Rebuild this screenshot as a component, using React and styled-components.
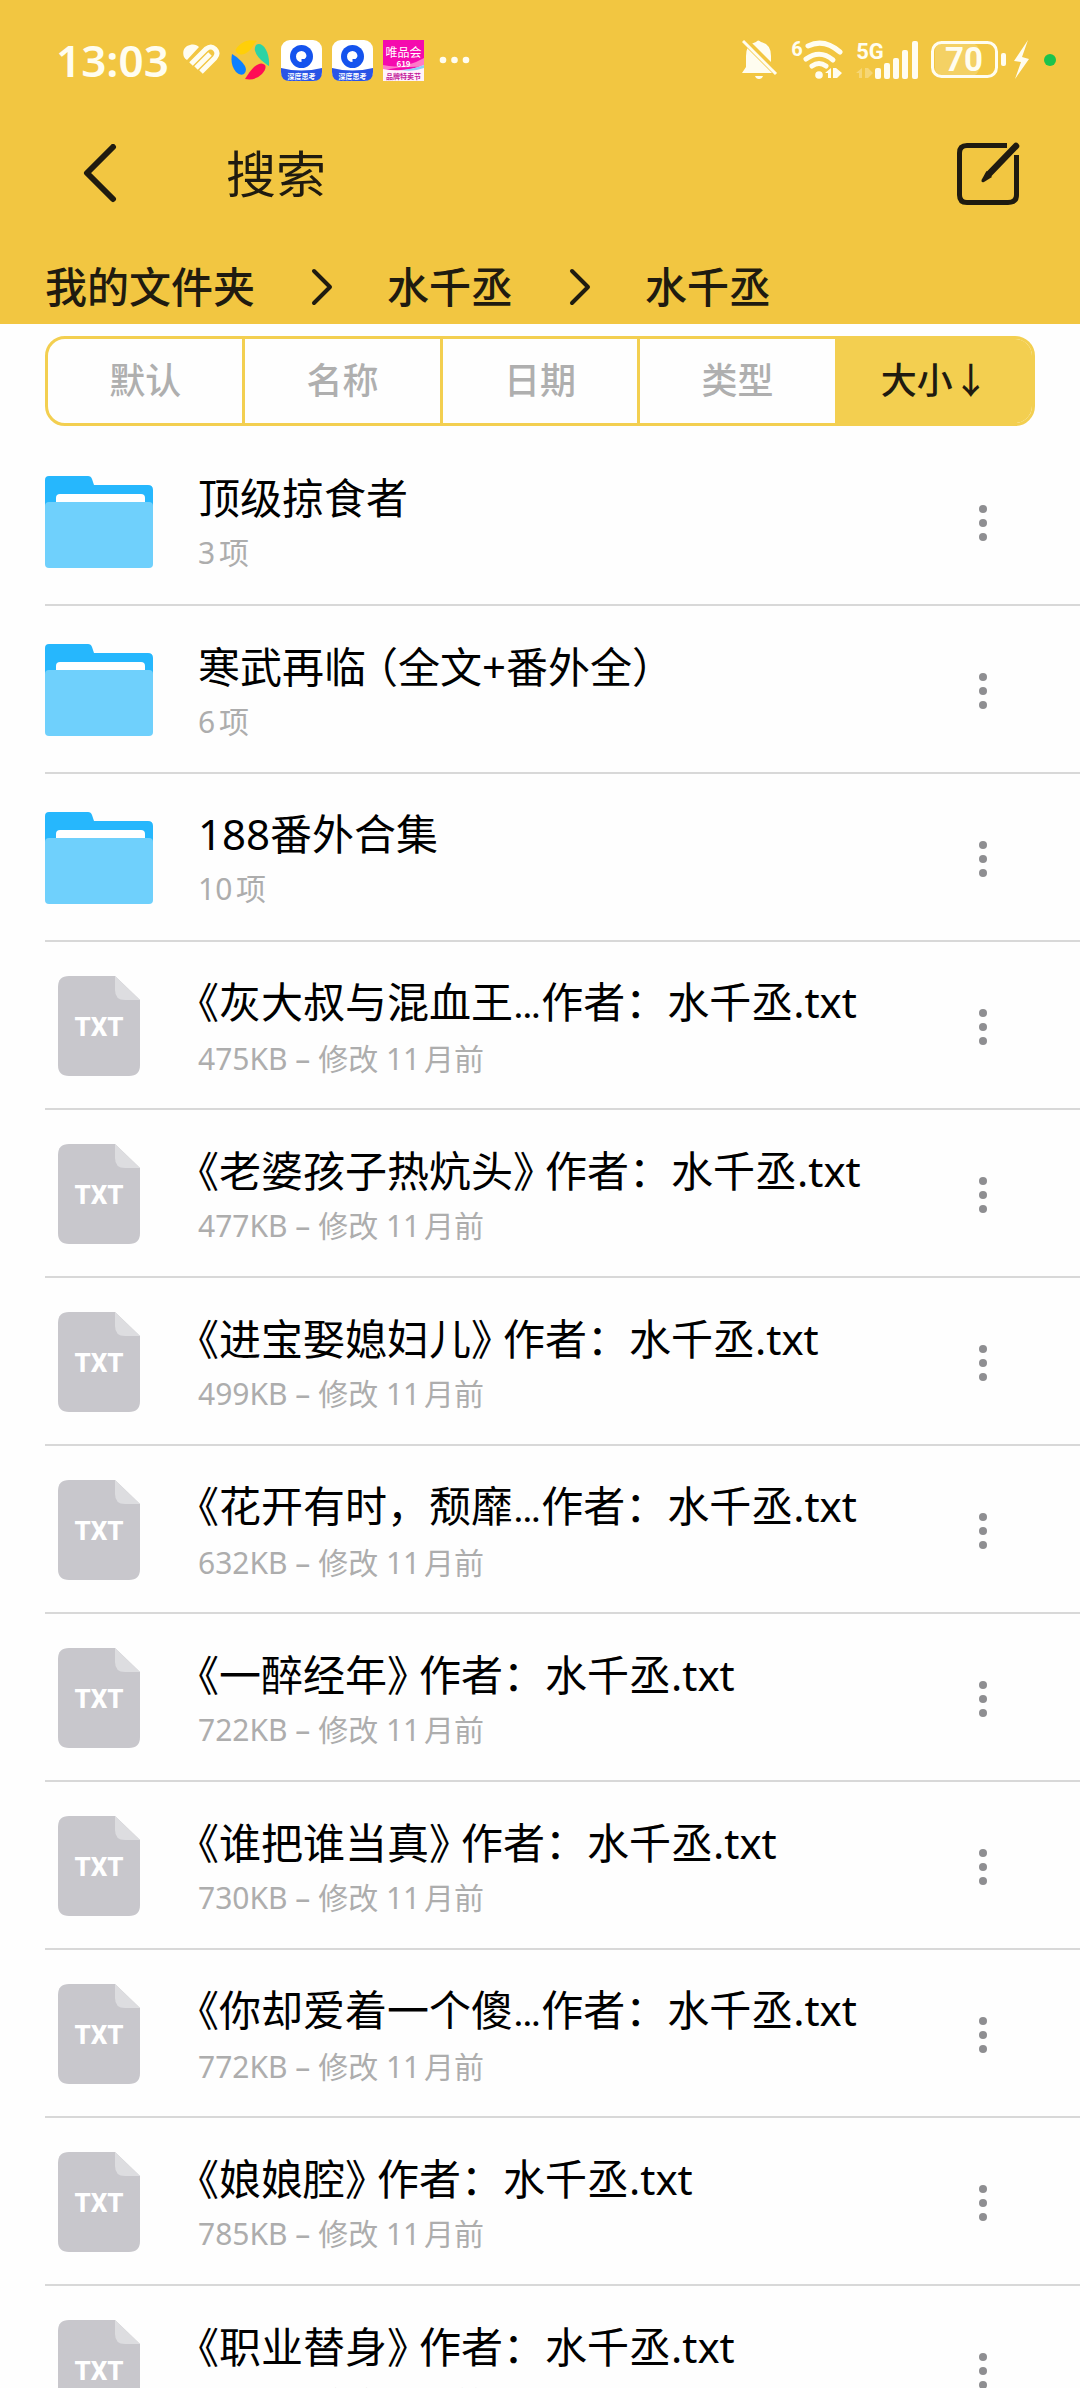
import React from "react";
import styled, { createGlobalStyle } from "styled-components";

const GlobalStyle = createGlobalStyle`
  * { box-sizing: border-box; }
  html, body { margin: 0; background: #fefefe; }
  body, button {
    font-family: "Noto Sans", "Noto Sans CJK SC", sans-serif;
  }
  button { margin: 0; padding: 0; border: 0; background: none; color: inherit; cursor: pointer; }
  svg { display: block; flex: none; }
`;

const Screen = styled.div`
  display: flex;
  flex-direction: column;
  height: 100vh;
  overflow: hidden;
  color: #000;
`;

const Header = styled.header`
  flex: none;
  background: #f2c641;
  color: #1f1b10;
`;

const StatusBar = styled.div`
  display: flex;
  align-items: center;
  justify-content: space-between;
  height: 120px;
  padding: 0 24px 0 56px;
  color: #fffdf0;
`;

const StatusGroup = styled.div`
  display: flex;
  align-items: center;
  gap: ${(p) => p.$gap}px;
`;

const Clock = styled.time`
  margin-right: 4px;
  font-size: 44px;
  line-height: 60px;
  font-weight: 600;
`;

const TitleBar = styled.div`
  display: flex;
  align-items: center;
  height: 108px;
  padding: 0 45px 0 70px;
`;

const IconButton = styled.button`
  display: flex;
  align-items: center;
  justify-content: center;
  width: ${(p) => p.$size}px;
  height: ${(p) => p.$size}px;
`;

const Title = styled.h1`
  flex: 1;
  margin: 0 0 0 96px;
  font-size: 50px;
  line-height: 72px;
  font-weight: 400;
`;

const Crumbs = styled.nav`
  display: flex;
  align-items: center;
  gap: 54px;
  height: 96px;
  padding: 22px 45px 0;
`;

const Crumb = styled.a`
  color: inherit;
  text-decoration: none;
  font-size: 42px;
  line-height: 60px;
  font-weight: 500;
`;

const SortBar = styled.div`
  display: flex;
  flex: none;
  height: 90px;
  margin: 12px 45px;
  border: 3px solid #f3cf50;
  border-radius: 20px;
  overflow: hidden;
`;

const SortTab = styled.button`
  flex: 1;
  border-right: ${(p) => (p.$last ? "0" : "3px solid #f3cf50")};
  background: ${(p) => (p.$active ? "#f3cf50" : "transparent")};
  color: ${(p) => (p.$active ? "#1f1b10" : "#afafaf")};
  font-size: 36px;
  line-height: 54px;
  font-weight: 500;
`;

const List = styled.ul`
  flex: 1;
  min-height: 0;
  margin: 0;
  padding: 0 0 0 45px;
  list-style: none;
  overflow-y: auto;
  scrollbar-width: none;
`;

const Row = styled.li`
  display: flex;
  align-items: center;
  height: 168px;
  padding-right: 53px;
  box-shadow: inset 0 -2px 0 #d8d8d8;
`;

const Thumb = styled.div`
  display: flex;
  flex: none;
  justify-content: center;
  width: 108px;
  margin-right: 45px;
`;

const Info = styled.div`
  flex: 1;
  min-width: 0;
  padding-top: 2px;
`;

const Name = styled.div`
  font-size: 42px;
  line-height: 60px;
  white-space: nowrap;
`;

const Bracket = styled.span`
  font-family: "Noto Sans CJK SC", sans-serif;
  font-feature-settings: "halt";
`;

const Ellipsis = styled.span`
  font-family: Roboto, sans-serif;
`;

const Meta = styled.div`
  color: #adadad;
  font-size: 30px;
  line-height: 50px;
  text-autospace: normal;
`;

const FileLabel = styled.text`
  fill: #fff;
  font-family: Roboto, sans-serif;
  font-size: 26px;
  font-weight: 800;
  text-anchor: middle;
`;

const BadgeText = styled.text`
  font-family: "Noto Sans CJK SC", sans-serif;
  font-size: ${(p) => p.$size}px;
  font-weight: ${(p) => p.$weight || 700};
  text-anchor: middle;
`;

const StatusText = styled.text`
  fill: currentColor;
  font-family: Roboto, sans-serif;
  font-size: ${(p) => p.$size}px;
  font-weight: 700;
  text-anchor: middle;
`;

const HeartIcon = () => (
  <svg width="38" height="34" viewBox="0 0 38 34" fill="none" stroke="currentColor" aria-hidden="true">
    <path d="M1 14C-1 9 1 3 7 2c4-1 7 0 9 2L4 17Q2 16 1 14z" fill="currentColor" stroke="none" />
    <g strokeWidth="5">
      <path d="M8 21L23 6Q28 2 32 6Q36 10 32 15L18 29" strokeLinejoin="round" />
      <path d="M13 25L27 11" />
    </g>
  </svg>
);

const PinwheelIcon = () => (
  <svg width="40" height="42" viewBox="0 0 40 42" aria-hidden="true">
    <path d="M5 10C11 1 20 0 26 2C23 4 22 9 18 12Q11 18 6 14Q4 12 5 10z" fill="#ffcf08" />
    <path d="M25 6C31 2 39 12 38 27Q36 26 30 21Q21 12 25 6z" fill="#2dd3a5" />
    <path d="M1 15Q5 17 10 22Q18 30 13 35Q9 37 5 33Q-1 26 1 15z" fill="#0b80ff" />
    <path d="M14 40C17 35 20 31 23 28Q30 22 34 26Q36 29 31 35Q24 42 14 40z" fill="#ff0d55" />
  </svg>
);

const ExamIcon = () => (
  <svg width="41" height="41" viewBox="0 0 41 41" aria-hidden="true">
    <rect width="41" height="41" rx="9" fill="#fff" />
    <path d="M0 28Q20 33 41 28V32Q41 41 32 41H9Q0 41 0 32z" fill="#2a55e6" />
    <circle cx="20.500" cy="16.500" r="11.500" fill="#1453ee" />
    <path d="M20.500 11a5.500 5.500 0 1 0 0 11v-3h3a5 5 0 0 0 2-3a5.500 5.500 0 0 0-5-5z" fill="#fff" />
    <BadgeText x="20.500" y="38.500" $size={7} fill="#fff">深度思考</BadgeText>
  </svg>
);

const ShopIcon = () => (
  <svg width="41" height="41" viewBox="0 0 41 41" aria-hidden="true">
    <rect width="41" height="41" fill="#f50aae" />
    <path d="M0 25Q20 30 41 18V27Q20 26 0 30z" fill="#ff7ac8" />
    <path d="M0 29Q22 33 41 25V41H0z" fill="#fff3fb" />
    <path d="M18 30Q32 29 41 25V28Q30 32 18 30z" fill="#8fd0f5" />
    <BadgeText x="20.500" y="17" $size={12} $weight={400} fill="#fff">唯品会</BadgeText>
    <BadgeText x="20.500" y="27" $size={8} fill="#fff">619</BadgeText>
    <BadgeText x="20.500" y="38.500" $size={7} fill="#c2189b">品牌特卖节</BadgeText>
  </svg>
);

const MoreNotices = () => (
  <svg width="38" height="10" viewBox="0 0 38 10" fill="currentColor" aria-hidden="true">
    <circle cx="9" cy="5" r="3.300" />
    <circle cx="20.500" cy="5" r="3.300" />
    <circle cx="32" cy="5" r="3.300" />
  </svg>
);

const MutedIcon = () => (
  <svg width="36" height="42" viewBox="0 0 36 42" fill="currentColor" aria-hidden="true">
    <path d="M0 34L4 28V17Q4 5 14 3Q16 0 19 3Q29 5 29 17V28L34 34z" />
    <path d="M13 37h8q-1 3-4 3t-4-3z" />
    <path d="M2 1L36 35" stroke="#f2c641" strokeWidth="7" />
    <path d="M1 2L34 35" stroke="currentColor" strokeWidth="3" />
  </svg>
);

const WifiIcon = () => (
  <svg width="54" height="42" viewBox="0 0 54 42" fill="none" stroke="currentColor" aria-hidden="true">
    <StatusText x="7" y="17" $size={20} stroke="none">6</StatusText>
    <g strokeWidth="5" strokeLinecap="round">
      <path d="M18 7Q34 -1 50 13" />
      <path d="M16 20Q30 10 43 21" />
      <path d="M22 27Q29 22 36 27" />
    </g>
    <g fill="currentColor" stroke="none">
      <circle cx="29" cy="36" r="3.800" />
      <path d="M35 34l6-5v10h-3v-5zM43 29h3l6 5l-5 5h-4z" />
    </g>
  </svg>
);

const SignalIcon = () => (
  <svg width="63" height="42" viewBox="0 0 63 42" fill="currentColor" aria-hidden="true">
    <StatusText x="14" y="20" $size={22}>5G</StatusText>
    <path d="M0 34l6-5v10H3v-5zM9 29h3l5 5l-5 5H9z" opacity="0.3" />
    <rect x="19" y="29" width="6" height="11" rx="2" />
    <rect x="28" y="24" width="6" height="16" rx="2" />
    <rect x="37" y="19" width="6" height="21" rx="2" />
    <rect x="46" y="11" width="6" height="29" rx="2" />
    <rect x="56" y="2" width="6" height="38" rx="2" />
  </svg>
);

const BatteryIcon = () => (
  <svg width="101" height="42" viewBox="0 0 101 42" fill="currentColor" aria-hidden="true">
    <rect x="4" y="4" width="44" height="33" rx="8" opacity="0.2" />
    <rect x="1.500" y="3.500" width="64" height="34" rx="9" fill="none" stroke="currentColor" strokeWidth="3" />
    <StatusText x="33" y="32" $size={33}>70</StatusText>
    <rect x="70" y="14" width="5" height="13" rx="2" />
    <path d="M97 1L83 22L90 23L84 40L98 20L91 18z" />
  </svg>
);

const ActiveDot = styled.span`
  width: 12px;
  height: 12px;
  border-radius: 50%;
  background: #1cc34c;
`;

const BackIcon = () => (
  <svg width="60" height="60" viewBox="0 0 60 60" fill="none" stroke="currentColor" strokeWidth="6" strokeLinecap="round" strokeLinejoin="round" aria-hidden="true">
    <path d="M43 3L17 29L43 55" />
  </svg>
);

const EditIcon = () => (
  <svg width="66" height="66" viewBox="0 0 66 66" fill="none" stroke="currentColor" strokeWidth="5" aria-hidden="true">
    <path d="M50 4.500H10Q2.500 4.500 2.500 12V54Q2.500 61.500 10 61.500H51Q59.500 61.500 59.500 54V14" />
    <path d="M59 5L32 33" strokeWidth="6.500" strokeLinecap="round" />
    <path d="M29.500 30L24.500 39Q24 42 27 41L35 36z" fill="currentColor" stroke="none" />
  </svg>
);

const CrumbArrow = () => (
  <svg width="24" height="40" viewBox="0 0 24 40" fill="none" stroke="currentColor" strokeWidth="4" strokeLinecap="round" strokeLinejoin="round" aria-hidden="true">
    <path d="M5 4L21 20L5 36" />
  </svg>
);

const FolderIcon = () => (
  <svg width="108" height="92" viewBox="0 0 108 92" aria-hidden="true">
    <path d="M4 0H43Q46 0 47 3L49 9H103Q108 9 108 14V50H0V4Q0 0 4 0z" fill="#26b7fd" />
    <path d="M11 40V22Q11 18 15 18H96Q100 18 100 22V40z" fill="#fff" />
    <path d="M4 26H104Q108 26 108 30V88Q108 92 104 92H4Q0 92 0 88V30Q0 26 4 26z" fill="#6fd0fc" />
  </svg>
);

const TextFileIcon = () => (
  <svg width="82" height="100" viewBox="0 0 82 100" aria-hidden="true">
    <path d="M11 0H57L82 24V89Q82 100 71 100H11Q0 100 0 89V11Q0 0 11 0z" fill="#c8c7cc" />
    <path d="M57 0L82 24H67Q57 24 57 14z" fill="#dddde0" />
    <FileLabel x="41" y="60">TXT</FileLabel>
  </svg>
);

const MoreIcon = () => (
  <svg width="12" height="44" viewBox="0 0 12 44" fill="#8e8e91" aria-hidden="true">
    <circle cx="6" cy="9" r="4" />
    <circle cx="6" cy="23" r="4" />
    <circle cx="6" cy="37" r="4" />
  </svg>
);

const crumbs = ["我的文件夹", "水千丞", "水千丞"];
const sorts = ["默认", "名称", "日期", "类型", "大小↓"];
const files = [
  { folder: true, name: "顶级掠食者", meta: "3项" },
  { folder: true, name: "寒武再临 （全文+番外全）", meta: "6项" },
  { folder: true, name: "188番外合集", meta: "10项" },
  { name: "《灰大叔与混血王…作者：水千丞.txt", meta: "475KB – 修改 11月前" },
  { name: "《老婆孩子热炕头》 作者：水千丞.txt", meta: "477KB – 修改 11月前" },
  { name: "《进宝娶媳妇儿》 作者：水千丞.txt", meta: "499KB – 修改 11月前" },
  { name: "《花开有时，颓靡…作者：水千丞.txt", meta: "632KB – 修改 11月前" },
  { name: "《一醉经年》 作者：水千丞.txt", meta: "722KB – 修改 11月前" },
  { name: "《谁把谁当真》 作者：水千丞.txt", meta: "730KB – 修改 11月前" },
  { name: "《你却爱着一个傻…作者：水千丞.txt", meta: "772KB – 修改 11月前" },
  { name: "《娘娘腔》 作者：水千丞.txt", meta: "785KB – 修改 11月前" },
  { name: "《职业替身》 作者：水千丞.txt", meta: "788KB – 修改 11月前" },
];

// Brackets are set half-width; everything else keeps its full advance.
const FileName = ({ text }) => (
  <Name>
    {text.split(/([《》（）…])/).map((part, i) => {
      if (part === "…") return <Ellipsis key={i}>{part}</Ellipsis>;
      return /[《》（）]/.test(part) ? <Bracket key={i}>{part}</Bracket> : part;
    })}
  </Name>
);

export default function App() {
  const [sort, setSort] = React.useState(4);
  return (
    <Screen>
      <GlobalStyle />
      <Header>
        <StatusBar>
          <StatusGroup $gap={10}>
            <Clock>13:03</Clock>
            <HeartIcon />
            <PinwheelIcon />
            <ExamIcon />
            <ExamIcon />
            <ShopIcon />
            <MoreNotices />
          </StatusGroup>
          <StatusGroup $gap={12}>
            <MutedIcon />
            <WifiIcon />
            <SignalIcon />
            <BatteryIcon />
            <ActiveDot />
          </StatusGroup>
        </StatusBar>
        <TitleBar>
          <IconButton $size={60} aria-label="返回">
            <BackIcon />
          </IconButton>
          <Title>搜索</Title>
          <IconButton $size={90} aria-label="编辑">
            <EditIcon />
          </IconButton>
        </TitleBar>
        <Crumbs>
          {crumbs.map((name, i) => (
            <React.Fragment key={i}>
              {i > 0 && <CrumbArrow />}
              <Crumb href="#">{name}</Crumb>
            </React.Fragment>
          ))}
        </Crumbs>
      </Header>
      <SortBar>
        {sorts.map((label, i) => (
          <SortTab
            key={label}
            $active={i === sort}
            $last={i === sorts.length - 1}
            aria-pressed={i === sort}
            onClick={() => setSort(i)}
          >
            {label}
          </SortTab>
        ))}
      </SortBar>
      <List>
        {files.map((file) => (
          <Row key={file.name}>
            <Thumb>{file.folder ? <FolderIcon /> : <TextFileIcon />}</Thumb>
            <Info>
              <FileName text={file.name} />
              <Meta>{file.meta}</Meta>
            </Info>
            <IconButton $size={88} aria-label="更多">
              <MoreIcon />
            </IconButton>
          </Row>
        ))}
      </List>
    </Screen>
  );
}
